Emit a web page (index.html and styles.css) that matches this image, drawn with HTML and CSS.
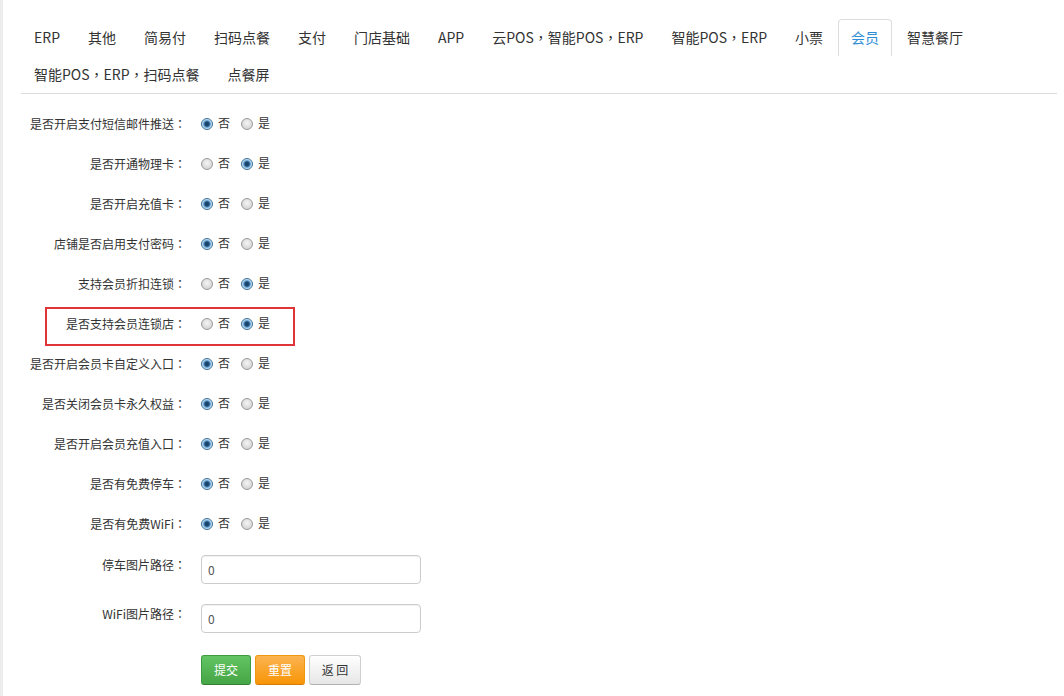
FILE: index.html
```html
<!DOCTYPE html>
<html lang="zh-CN">
<head>
<meta charset="utf-8">
<title>会员设置</title>
<link rel="stylesheet" href="styles.css">
</head>
<body>
<div class="page">
  <ul class="tabs">
    <li class="tab">ERP</li>
    <li class="tab">其他</li>
    <li class="tab">简易付</li>
    <li class="tab">扫码点餐</li>
    <li class="tab">支付</li>
    <li class="tab">门店基础</li>
    <li class="tab">APP</li>
    <li class="tab">云POS<span class="p" lang="zh-TW">，</span>智能POS<span class="p" lang="zh-TW">，</span>ERP</li>
    <li class="tab">智能POS<span class="p" lang="zh-TW">，</span>ERP</li>
    <li class="tab">小票</li>
    <li class="tab active">会员</li>
    <li class="tab">智慧餐厅</li>
    <li class="tab">智能POS<span class="p" lang="zh-TW">，</span>ERP<span class="p" lang="zh-TW">，</span>扫码点餐</li>
    <li class="tab">点餐屏</li>
  </ul>

  <form class="form">
    <div class="row">
      <label class="label">是否开启支付短信邮件推送<span class="p" lang="zh-TW">：</span></label>
      <div class="choices">
        <span class="radio checked"></span><span class="opt">否</span>
        <span class="radio"></span><span class="opt">是</span>
      </div>
    </div>
    <div class="row">
      <label class="label">是否开通物理卡<span class="p" lang="zh-TW">：</span></label>
      <div class="choices">
        <span class="radio"></span><span class="opt">否</span>
        <span class="radio checked"></span><span class="opt">是</span>
      </div>
    </div>
    <div class="row">
      <label class="label">是否开启充值卡<span class="p" lang="zh-TW">：</span></label>
      <div class="choices">
        <span class="radio checked"></span><span class="opt">否</span>
        <span class="radio"></span><span class="opt">是</span>
      </div>
    </div>
    <div class="row">
      <label class="label">店铺是否启用支付密码<span class="p" lang="zh-TW">：</span></label>
      <div class="choices">
        <span class="radio checked"></span><span class="opt">否</span>
        <span class="radio"></span><span class="opt">是</span>
      </div>
    </div>
    <div class="row">
      <label class="label">支持会员折扣连锁<span class="p" lang="zh-TW">：</span></label>
      <div class="choices">
        <span class="radio"></span><span class="opt">否</span>
        <span class="radio checked"></span><span class="opt">是</span>
      </div>
    </div>
    <div class="row highlight">
      <label class="label">是否支持会员连锁店<span class="p" lang="zh-TW">：</span></label>
      <div class="choices">
        <span class="radio"></span><span class="opt">否</span>
        <span class="radio checked"></span><span class="opt">是</span>
      </div>
    </div>
    <div class="row">
      <label class="label">是否开启会员卡自定义入口<span class="p" lang="zh-TW">：</span></label>
      <div class="choices">
        <span class="radio checked"></span><span class="opt">否</span>
        <span class="radio"></span><span class="opt">是</span>
      </div>
    </div>
    <div class="row">
      <label class="label">是否关闭会员卡永久权益<span class="p" lang="zh-TW">：</span></label>
      <div class="choices">
        <span class="radio checked"></span><span class="opt">否</span>
        <span class="radio"></span><span class="opt">是</span>
      </div>
    </div>
    <div class="row">
      <label class="label">是否开启会员充值入口<span class="p" lang="zh-TW">：</span></label>
      <div class="choices">
        <span class="radio checked"></span><span class="opt">否</span>
        <span class="radio"></span><span class="opt">是</span>
      </div>
    </div>
    <div class="row">
      <label class="label">是否有免费停车<span class="p" lang="zh-TW">：</span></label>
      <div class="choices">
        <span class="radio checked"></span><span class="opt">否</span>
        <span class="radio"></span><span class="opt">是</span>
      </div>
    </div>
    <div class="row">
      <label class="label">是否有免费WiFi<span class="p" lang="zh-TW">：</span></label>
      <div class="choices">
        <span class="radio checked"></span><span class="opt">否</span>
        <span class="radio"></span><span class="opt">是</span>
      </div>
    </div>

    <div class="field first">
      <label class="label">停车图片路径<span class="p" lang="zh-TW">：</span></label>
      <div class="input">0</div>
    </div>
    <div class="field">
      <label class="label">WiFi图片路径<span class="p" lang="zh-TW">：</span></label>
      <div class="input">0</div>
    </div>

    <div class="actions">
      <span class="btn btn-green">提交</span>
      <span class="btn btn-orange">重置</span>
      <span class="btn btn-default">返 回</span>
    </div>
  </form>
</div>
</body>
</html>
```
FILE: styles.css
```css
* { box-sizing: border-box; }
html, body { margin: 0; padding: 0; background: #fff; }
body {
  font-family: "Noto Sans CJK SC", "Noto Sans", sans-serif;
  color: #333;
  width: 1064px;
  height: 696px;
  overflow: hidden;
}
.p {
  font-family: "Noto Sans CJK TC", "Noto Sans CJK SC", sans-serif;
}
.page {
  border-left: 3px solid #ededed;
  height: 696px;
  padding: 19px 7px 0 18px;
}
.tabs {
  list-style: none;
  margin: 0;
  padding: 0;
  display: flex;
  flex-wrap: wrap;
  border-bottom: 1px solid #dcdcdc;
}
.tab {
  font-size: 14px;
  line-height: 35px;
  height: 37px;
  padding: 0 12px;
  margin-right: 2px;
  border: 1px solid transparent;
  border-bottom: 0;
  border-radius: 4px 4px 0 0;
  color: #333;
  white-space: nowrap;
}
.tab.active {
  border-color: #ddd;
  color: #2f8dd3;
  background: #fff;
}
.form {
  padding-top: 10px;
}
.row {
  display: flex;
  align-items: center;
  height: 40px;
  position: relative;
}
.row.highlight::after {
  content: "";
  position: absolute;
  left: 24px;
  top: 3px;
  width: 246px;
  height: 35px;
  border: 2px solid #df3438;
}
.label {
  width: 165px;
  flex: none;
  text-align: right;
  font-size: 12px;
  line-height: 20px;
  color: #333;
  margin-right: 15px;
}
.choices {
  display: flex;
  align-items: center;
  font-size: 12px;
}
.radio {
  width: 12px;
  height: 12px;
  border-radius: 50%;
  border: 1px solid #999b9c;
  background: radial-gradient(circle at 50% 40%, #f4f4f4 0, #e2e2e2 45%, #c8c8c8 100%);
  flex: none;
}
.radio.checked {
  border-color: #3a6e98;
  background: radial-gradient(circle, #163d5c 0, #1f4f78 2.2px, #5d9bcd 3.2px, #cfe6f6 4.8px, #e8f3fb 100%);
}
.opt {
  margin: 0 11px 0 5px;
  line-height: 20px;
  position: relative;
  top: -1px;
}
.field {
  display: flex;
  align-items: flex-start;
  margin-top: 20px;
}
.field.first { margin-top: 11px; }
.input {
  width: 220px;
  height: 29px;
  border: 1px solid #ccc;
  border-radius: 4px;
  box-shadow: inset 0 1px 1px rgba(0,0,0,0.06);
  font-size: 12px;
  line-height: 27px;
  padding: 0 6px;
  color: #555;
}
.actions {
  display: flex;
  gap: 4px;
  margin-top: 22px;
  padding-left: 180px;
}
.btn {
  height: 30px;
  line-height: 28px;
  font-size: 12px;
  padding: 0 11px;
  border-radius: 3px;
  border: 1px solid;
  text-align: center;
}
.btn-green {
  width: 50px;
  color: #fff;
  background: linear-gradient(#62c462, #46a546);
  border-color: #3f9b3f #3f9b3f #357f35;
}
.btn-orange {
  width: 50px;
  color: #fff;
  background: linear-gradient(#fbb450, #f89406);
  border-color: #f0960f #f0960f #d47d00;
}
.btn-default {
  width: 52px;
  color: #333;
  background: linear-gradient(#ffffff, #e6e6e6);
  border-color: #d0d0d0 #d0d0d0 #b3b3b3;
}
```
